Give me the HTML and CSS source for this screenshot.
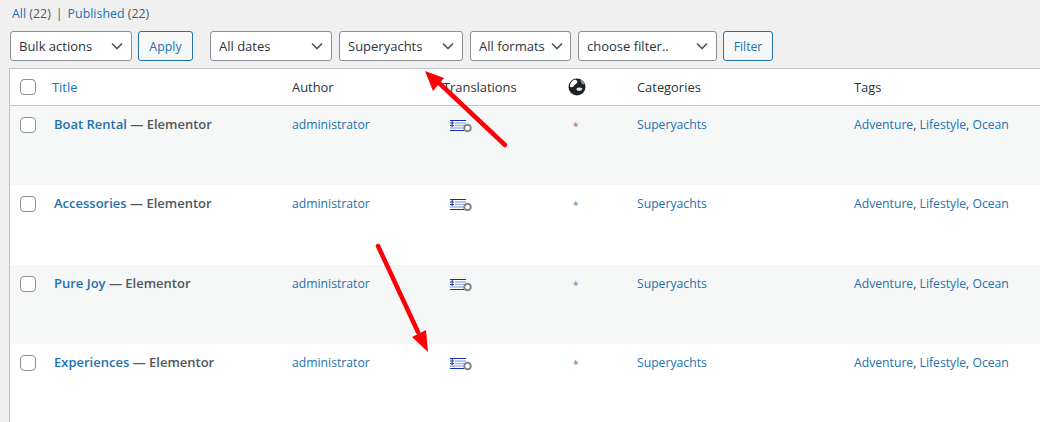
FILE: index.html
```html
<!DOCTYPE html>
<html lang="en">
<head>
<meta charset="utf-8">
<title>Pages</title>
<link rel="stylesheet" href="styles.css">
</head>
<body>
<ul class="views">
  <li><a href="#">All</a> <span class="count">(22)</span></li>
  <li class="sep">|</li>
  <li><a href="#">Published</a> <span class="count">(22)</span></li>
</ul>
<div class="nav">
  <div class="group">
    <div class="select w-bulk">Bulk actions<svg class="chev" viewBox="0 0 12 8"><path d="M1 1.500l5 5 5-5"/></svg></div>
    <button class="btn w-apply">Apply</button>
  </div>
  <div class="group filters">
    <div class="select w-dates">All dates<svg class="chev" viewBox="0 0 12 8"><path d="M1 1.500l5 5 5-5"/></svg></div>
    <div class="select w-cat">Superyachts<svg class="chev" viewBox="0 0 12 8"><path d="M1 1.500l5 5 5-5"/></svg></div>
    <div class="select w-fmt">All formats<svg class="chev" viewBox="0 0 12 8"><path d="M1 1.500l5 5 5-5"/></svg></div>
    <div class="select w-choose">choose filter..<svg class="chev" viewBox="0 0 12 8"><path d="M1 1.500l5 5 5-5"/></svg></div>
    <button class="btn w-filter">Filter</button>
  </div>
</div>
<table class="list">
  <colgroup>
    <col class="c-check"><col class="c-title"><col class="c-author"><col class="c-trans"><col class="c-globe"><col class="c-cats"><col class="c-tags">
  </colgroup>
  <thead>
    <tr>
      <th><span class="box"></span></th>
      <th class="link">Title</th>
      <th>Author</th>
      <th>Translations</th>
      <th class="globe-cell"><svg class="globe" viewBox="0 0 18 18"><circle cx="9" cy="9" r="8.500" fill="#1d2327"/><path d="M7 1.500C4 2.500 2 5 1.800 8.500c1.700 1.200 3.600.6 4.400-1C7 6 9.500 5.500 9.500 3.500 9 2.500 8 2 7 1.500z" fill="#fff"/><path d="M8.500 10.500c1.500-1.300 3.800-1.300 5.800-.3.200 1.300-1.300 2.800-3.300 2.800-1.500 0-3-1-2.500-2.500z" fill="#dbe6ee"/><path d="M12 1.500c2.200.9 3.900 2.800 4.700 5l-2.700-.4z" fill="#6fa3d0"/></svg></th>
      <th>Categories</th>
      <th>Tags</th>
    </tr>
  </thead>
  <tbody>
    <tr class="alt">
      <td><span class="box"></span></td>
      <td class="name"><a href="#">Boat Rental</a> — Elementor</td>
      <td><a href="#">administrator</a></td>
      <td><svg class="flag" viewBox="0 0 24 14"><use href="#flag-icon"/></svg></td>
      <td class="star red">*</td>
      <td><a href="#">Superyachts</a></td>
      <td><a href="#">Adventure</a>, <a href="#">Lifestyle</a>, <a href="#">Ocean</a></td>
    </tr>
    <tr>
      <td><span class="box"></span></td>
      <td class="name"><a href="#">Accessories</a> — Elementor</td>
      <td><a href="#">administrator</a></td>
      <td><svg class="flag" viewBox="0 0 24 14"><use href="#flag-icon"/></svg></td>
      <td class="star">*</td>
      <td><a href="#">Superyachts</a></td>
      <td><a href="#">Adventure</a>, <a href="#">Lifestyle</a>, <a href="#">Ocean</a></td>
    </tr>
    <tr class="alt">
      <td><span class="box"></span></td>
      <td class="name"><a href="#">Pure Joy</a> — Elementor</td>
      <td><a href="#">administrator</a></td>
      <td><svg class="flag" viewBox="0 0 24 14"><use href="#flag-icon"/></svg></td>
      <td class="star">*</td>
      <td><a href="#">Superyachts</a></td>
      <td><a href="#">Adventure</a>, <a href="#">Lifestyle</a>, <a href="#">Ocean</a></td>
    </tr>
    <tr>
      <td><span class="box"></span></td>
      <td class="name"><a href="#">Experiences</a> — Elementor</td>
      <td><a href="#">administrator</a></td>
      <td><svg class="flag" viewBox="0 0 24 14"><use href="#flag-icon"/></svg></td>
      <td class="star red">*</td>
      <td><a href="#">Superyachts</a></td>
      <td><a href="#">Adventure</a>, <a href="#">Lifestyle</a>, <a href="#">Ocean</a></td>
    </tr>
  </tbody>
</table>
<svg class="defs" width="0" height="0">
  <symbol id="flag-icon" viewBox="0 0 24 14">
    <rect x="0" y="0" width="16" height="11" fill="#fff"/>
    <path d="M5 3h11M5 5.500h11M0 8h16" stroke="#a9b6e2" stroke-width="1.500" fill="none"/>
    <path d="M0 .5h16M0 10.500h16" stroke="#0f2fb5" stroke-width="1.200" fill="none"/>
    <path d="M0 3h1.500M3 3h1M0 5.500h1.500M3 5.500h1M2.200 1v6" stroke="#0f2fb5" stroke-width="1.100" fill="none"/>
    <circle cx="17.500" cy="8" r="4.400" fill="#b9dcf2"/>
    <circle cx="17.500" cy="8" r="3.200" fill="#fff" stroke="#7d8388" stroke-width="1.700"/>
  </symbol>
</svg>
<svg class="arrows" viewBox="0 0 1040 422">
  <path d="M505 145L437 81" stroke="#fb0007" stroke-width="4.500" stroke-linecap="round" fill="none"/>
  <path d="M425 71l19 7-11 13z" fill="#fb0007"/>
  <path d="M378 246L418 332" stroke="#fb0007" stroke-width="4.500" stroke-linecap="round" fill="none"/>
  <path d="M428 352l-16-15 14-7z" fill="#fb0007"/>
</svg>
</body>
</html>
```
FILE: styles.css
```css
* { box-sizing: border-box; }
html, body { height: 100%; }
body {
  margin: 0;
  position: relative;
  overflow: hidden;
  background: #f0f0f1;
  color: #3c434a;
  font-family: "Open Sans", "Noto Sans", sans-serif;
  font-size: 12.2px;
  padding: 4px 0 0 10px;
}
a { color: #2271b1; text-decoration: none; }
.views {
  list-style: none;
  margin: 0;
  padding: 0 0 0 2px;
  display: flex;
  gap: 5px;
  height: 19px;
  line-height: 19px;
  font-size: 12.400px;
  color: #50575e;
}
.sep { color: #50575e; }
.count { color: #50575e; }
.nav {
  display: flex;
  margin-top: 8px;
  height: 30px;
}
.group { display: flex; gap: 6px; }
.filters { margin-left: 17px; gap: 7px; }
.select {
  height: 30px;
  border: 1px solid #8c8f94;
  border-radius: 3px;
  background: #fff;
  color: #2c3338;
  font-size: 13px;
  padding: 0 8px;
  display: flex;
  align-items: center;
  justify-content: space-between;
  line-height: 28px;
}
.chev { width: 12px; height: 8px; flex: none; }
.chev path { fill: none; stroke: #50575e; stroke-width: 1.600; }
.w-bulk { width: 122px; }
.w-dates { width: 122px; }
.w-cat { width: 124px; }
.w-fmt { width: 101px; padding-right: 7px; white-space: nowrap; }
.w-choose { width: 139px; }
.btn {
  height: 30px;
  border: 1px solid #2271b1;
  border-radius: 3px;
  background: #f6f7f7;
  color: #2271b1;
  font: inherit;
  padding: 0;
}
.w-apply { width: 55px; font-size: 12.400px; }
.w-filter { width: 50px; margin-left: -1px; }
.list {
  margin: 7px 0 0 -1px;
  width: 1040px;
  table-layout: fixed;
  border-collapse: separate;
  border-spacing: 0;
  border-top: 1px solid #c3c4c7;
  border-left: 1px solid #c3c4c7;
  background: #fff;
}
.c-check { width: 32px; }
.c-title { width: 240px; }
.c-author { width: 151px; }
.c-trans { width: 125px; }
.c-globe { width: 69px; }
.c-cats { width: 217px; }
.c-tags { width: 206px; }
th {
  height: 37px;
  padding: 0 0 0 10px;
  font-weight: 400;
  font-size: 12.900px;
  text-align: left;
  color: #2c3338;
  border-bottom: 1px solid #c3c4c7;
  vertical-align: middle;
  white-space: nowrap;
}
th.link { color: #2271b1; }
th:first-child, td:first-child { padding-left: 10px; }
tbody tr { height: 79.400px; }
td {
  padding: 9px 0 0 10px;
  vertical-align: top;
  line-height: 19px;
  white-space: nowrap;
  overflow: hidden;
}
.alt td { background: #f6f7f7; }
td.name { padding-left: 12px; font-weight: 600; color: #50575e; font-size: 13px; }
.box {
  display: block;
  width: 16px;
  height: 16px;
  border: 1px solid #8c8f94;
  border-radius: 4px;
  background: #fff;
}
td:first-child .box { margin-top: 2px; }
.flag { display: block; width: 24px; height: 14px; margin: 5px 0 0 7px; }
.globe { display: block; width: 18px; height: 18px; }
.star { color: #5f7fa8; font-size: 10px; padding-left: 15px; padding-top: 11px; }
.star.red { color: #8a6a60; }
.defs { position: absolute; }
.arrows { position: absolute; left: 0; top: 0; width: 1040px; height: 422px; pointer-events: none; }
```
